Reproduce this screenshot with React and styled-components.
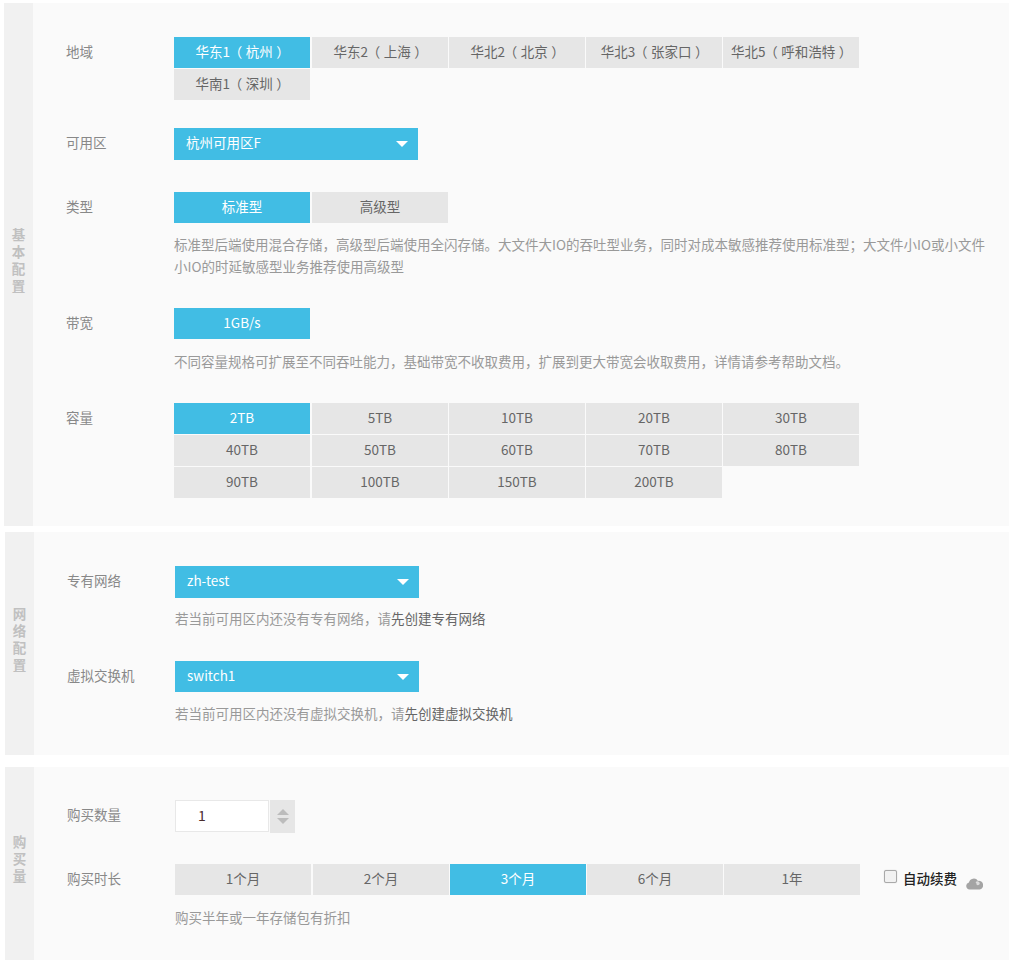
import React from 'react'
import styled, { createGlobalStyle } from 'styled-components'

const BLUE = '#41bde4'
const TILE_WIDTH = 136
const FONT = '"Noto Sans CJK SC", "Noto Sans", sans-serif'

const GlobalStyle = createGlobalStyle`
  html, body {
    margin: 0;
    padding: 0;
    background: #fff;
  }
  body {
    font-family: ${FONT};
    font-size: 13.5px;
    color: #666;
  }
`

const Page = styled.div`
  width: 1017px;
  height: 965px;
  overflow: hidden;
  padding-top: 3px;
  box-sizing: border-box;
`

const Panel = styled.section`
  display: flex;
  height: ${p => p.$height}px;
  margin-left: ${p => p.$left}px;
  margin-bottom: ${p => p.$gap}px;
  width: ${p => 1009 - p.$left}px;
  background: #fafafa;
`

const Side = styled.div`
  width: 29px;
  flex: none;
  box-sizing: border-box;
  padding-bottom: 10px;
  background: #f1f1f1;
  display: flex;
  align-items: center;
  justify-content: center;
  color: #c0c0c0;
  font-size: 13.5px;
  font-weight: 700;
  line-height: 17px;
  text-align: center;
`

const SideText = styled.div`
  width: 14px;
`

const Body = styled.div`
  flex: 1;
  padding: ${p => p.$top}px 0 0 33px;
`

const Row = styled.div`
  display: flex;
  margin-bottom: ${p => p.$after || 0}px;
`

const Label = styled.div`
  width: 108px;
  flex: none;
  color: #888;
  font-size: 13.5px;
  line-height: 29px;
`

const Field = styled.div`
  flex: 1;
  min-width: 0;
`

const Tiles = styled.div`
  display: grid;
  grid-template-columns: 137px repeat(4, ${TILE_WIDTH}px);
  column-gap: 1px;
  row-gap: 1px;
`

const Tile = styled.div`
  width: ${TILE_WIDTH}px;
  height: 31px;
  line-height: 29px;
  text-align: center;
  font-size: 13.5px;
  background: ${p => (p.$active ? BLUE : '#e6e6e6')};
  color: ${p => (p.$active ? '#fff' : '#666')};
`

// fullwidth brackets sit mid-cell in the reference, so trim them and space by hand
const Bracket = styled.span`
  font-feature-settings: "palt";
  margin: 0 ${p => p.$after}px 0 ${p => p.$before}px;
`

const Select = styled.div`
  width: 244px;
  height: ${p => p.$height || 32}px;
  line-height: ${p => (p.$height || 32) - 3}px;
  box-sizing: border-box;
  padding: 0 12px;
  background: ${BLUE};
  color: #fff;
  font-size: 13.5px;
  display: flex;
  justify-content: space-between;
  align-items: flex-start;
`

const Caret = styled.span`
  width: 0;
  height: 0;
  border-left: 6px solid transparent;
  border-right: 6px solid transparent;
  border-top: 6px solid #fff;
  margin-right: -2px;
  margin-top: 13px;
`

const Hint = styled.div`
  margin-top: ${p => p.$top}px;
  color: #999;
  font-size: 13.5px;
  line-height: 22px;
  white-space: nowrap;
`

const HintLink = styled.span`
  color: #666;
`

const Stepper = styled.div`
  display: flex;
  height: 33px;
`

const QtyInput = styled.div`
  width: 94px;
  height: 32px;
  box-sizing: border-box;
  border: 1px solid #e8e8e8;
  background: #fff;
  color: #4a2c2c;
  font-size: 14px;
  line-height: 28px;
  padding-left: 22px;
`

const Spin = styled.div`
  width: 25px;
  height: 33px;
  margin-left: 1px;
  background: #e6e6e6;
  display: flex;
  flex-direction: column;
  align-items: center;
  justify-content: center;
  gap: 3px;
`

const Arrow = styled.span`
  width: 0;
  height: 0;
  border-left: 6px solid transparent;
  border-right: 6px solid transparent;
  ${p => (p.$up ? 'border-bottom: 6px solid #bcbcbc;' : 'border-top: 6px solid #bcbcbc;')}
`

const DurationRow = styled.div`
  display: flex;
  align-items: flex-start;
`

const DurationTiles = styled(Tiles)`
  width: 686px;
  flex: none;
`

const Renew = styled.div`
  display: flex;
  align-items: flex-start;
  margin-left: 23px;
  padding-top: 6px;
`

const Check = styled.span`
  width: 11px;
  height: 11px;
  border: 1px solid #a9a9a9;
  border-radius: 2px;
  background: #f1f1f1;
  box-shadow: 0 0 1px #bbb;
  margin-right: 6px;
`

const RenewText = styled.span`
  color: #222;
  font-size: 13.5px;
  font-weight: 500;
  line-height: 16px;
  white-space: nowrap;
`

const CloudIcon = styled.svg`
  width: 17px;
  height: 13px;
  margin: 7px 0 0 9px;
`

const regions = [
  ['华东1', '杭州'],
  ['华东2', '上海'],
  ['华北2', '北京'],
  ['华北3', '张家口'],
  ['华北5', '呼和浩特'],
  ['华南1', '深圳'],
]
const capacities = ['2TB', '5TB', '10TB', '20TB', '30TB', '40TB', '50TB', '60TB', '70TB', '80TB', '90TB', '100TB', '150TB', '200TB']
const durations = ['1个月', '2个月', '3个月', '6个月', '1年']

const TileGroup = ({ items, active = 0 }) => (
  <Tiles>
    {items.map((item, i) => (
      <Tile key={item} $active={i === active}>{item}</Tile>
    ))}
  </Tiles>
)

export default function App() {
  return (
    <Page>
      <GlobalStyle />
      <Panel $left={4} $height={523} $gap={6}>
        <Side><SideText>基本配置</SideText></Side>
        <Body $top={34}>
          <Row $after={28}>
            <Label>地域</Label>
            <Field>
              <Tiles>
                {regions.map(([name, city], i) => (
                  <Tile key={name} $active={i === 0}>
                    {name}<Bracket $before={5} $after={4}>（</Bracket>{city}<Bracket $before={4} $after={5}>）</Bracket>
                  </Tile>
                ))}
              </Tiles>
            </Field>
          </Row>
          <Row $after={32}>
            <Label>可用区</Label>
            <Field>
              <Select>杭州可用区F<Caret /></Select>
            </Field>
          </Row>
          <Row $after={31}>
            <Label>类型</Label>
            <Field>
              <TileGroup items={['标准型', '高级型']} />
              <Hint $top={10}>
                标准型后端使用混合存储，高级型后端使用全闪存储。大文件大IO的吞吐型业务，同时对成本敏感推荐使用标准型；大文件小IO或小文件<br />
                小IO的时延敏感型业务推荐使用高级型
              </Hint>
            </Field>
          </Row>
          <Row $after={31}>
            <Label>带宽</Label>
            <Field>
              <TileGroup items={['1GB/s']} />
              <Hint $top={11}>不同容量规格可扩展至不同吞吐能力，基础带宽不收取费用，扩展到更大带宽会收取费用，详情请参考帮助文档。</Hint>
            </Field>
          </Row>
          <Row>
            <Label>容量</Label>
            <Field><TileGroup items={capacities} /></Field>
          </Row>
        </Body>
      </Panel>

      <Panel $left={5} $height={223} $gap={12}>
        <Side><SideText>网络配置</SideText></Side>
        <Body $top={34}>
          <Row $after={32}>
            <Label>专有网络</Label>
            <Field>
              <Select>zh-test<Caret /></Select>
              <Hint $top={9}>若当前可用区内还没有专有网络，请<HintLink>先创建专有网络</HintLink></Hint>
            </Field>
          </Row>
          <Row>
            <Label>虚拟交换机</Label>
            <Field>
              <Select $height={31}>switch1<Caret /></Select>
              <Hint $top={10}>若当前可用区内还没有虚拟交换机，请<HintLink>先创建虚拟交换机</HintLink></Hint>
            </Field>
          </Row>
        </Body>
      </Panel>

      <Panel $left={5} $height={193} $gap={0}>
        <Side><SideText>购买量</SideText></Side>
        <Body $top={33}>
          <Row $after={31}>
            <Label>购买数量</Label>
            <Field>
              <Stepper>
                <QtyInput>1</QtyInput>
                <Spin><Arrow $up /><Arrow /></Spin>
              </Stepper>
            </Field>
          </Row>
          <Row>
            <Label>购买时长</Label>
            <Field>
              <DurationRow>
                <DurationTiles>
                  {durations.map((d, i) => (
                    <Tile key={d} $active={i === 2}>{d}</Tile>
                  ))}
                </DurationTiles>
                <Renew>
                  <Check />
                  <RenewText>自动续费</RenewText>
                  <CloudIcon viewBox="0 0 17 13">
                    <path d="M3.6 12.5a3.5 3.5 0 0 1-.7-6.9A5 5 0 0 1 12 3.9a4.3 4.3 0 0 1 1.6 8.6z" fill="#a4a4a4" />
                    <path d="M9.6 5.2a2.4 2.4 0 0 1 4.2 1.4 2 2 0 0 1-3.2 1.2 3 3 0 0 0-1-2.6z" fill="#dcdcdc" />
                  </CloudIcon>
                </Renew>
              </DurationRow>
              <Hint $top={11}>购买半年或一年存储包有折扣</Hint>
            </Field>
          </Row>
        </Body>
      </Panel>
    </Page>
  )
}
